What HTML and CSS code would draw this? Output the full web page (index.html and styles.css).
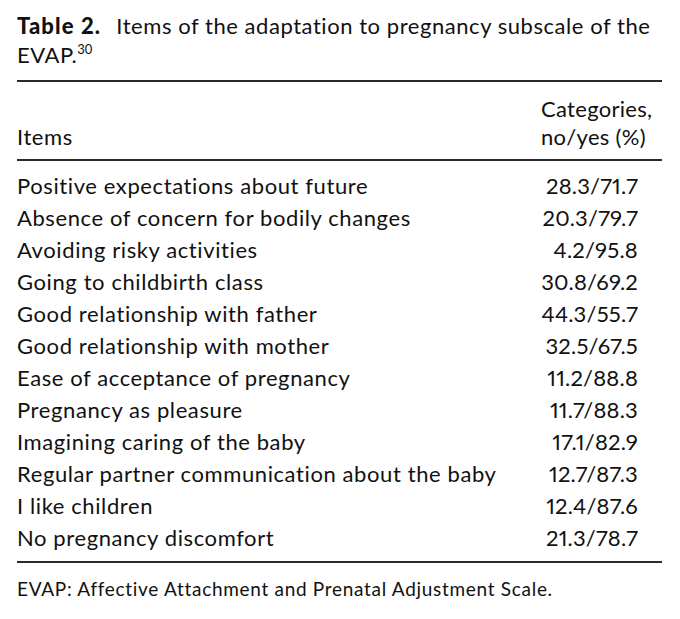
FILE: index.html
```html
<!DOCTYPE html>
<html>
<head>
<meta charset="utf-8">
<link rel="stylesheet" href="styles.css">
</head>
<body>
<div class="page">
  <div class="caption"><span class="label">Table 2.</span> Items of the adaptation to pregnancy subscale of the EVAP.<sup>30</sup></div>
  <div class="table">
    <div class="head">
      <div class="h-items">Items</div>
      <div class="h-cat">Categories,<br>no/yes (%)</div>
    </div>
    <div class="body">
      <div class="row"><span>Positive expectations about future</span><span class="val">28.3/71.7</span></div>
      <div class="row"><span>Absence of concern for bodily changes</span><span class="val">20.3/79.7</span></div>
      <div class="row"><span>Avoiding risky activities</span><span class="val">4.2/95.8</span></div>
      <div class="row"><span>Going to childbirth class</span><span class="val">30.8/69.2</span></div>
      <div class="row"><span>Good relationship with father</span><span class="val">44.3/55.7</span></div>
      <div class="row"><span>Good relationship with mother</span><span class="val">32.5/67.5</span></div>
      <div class="row"><span>Ease of acceptance of pregnancy</span><span class="val">11.2/88.8</span></div>
      <div class="row"><span>Pregnancy as pleasure</span><span class="val">11.7/88.3</span></div>
      <div class="row"><span>Imagining caring of the baby</span><span class="val">17.1/82.9</span></div>
      <div class="row"><span>Regular partner communication about the baby</span><span class="val">12.7/87.3</span></div>
      <div class="row"><span>I like children</span><span class="val">12.4/87.6</span></div>
      <div class="row"><span>No pregnancy discomfort</span><span class="val">21.3/78.7</span></div>
    </div>
  </div>
  <div class="note">EVAP: Affective Attachment and Prenatal Adjustment Scale.</div>
</div>
</body>
</html>
```
FILE: styles.css
```css
html, body {
  margin: 0;
  padding: 0;
  background: #ffffff;
}
body {
  font-family: "Lato", "Open Sans", sans-serif;
  color: #111111;
}
.page {
  width: 645px;
  padding: 11px 0 0 17px;
}
.caption {
  font-size: 22px;
  line-height: 29px;
  letter-spacing: 0.55px;
}
.caption .label {
  font-weight: 900;
  letter-spacing: 1.1px;
  margin-right: 9px;
}
.caption sup {
  font-size: 13px;
  line-height: 0;
  letter-spacing: 0;
  vertical-align: 9px;
}
.table {
  margin-top: 11px;
  border-top: 2px solid #2a2a2a;
  border-bottom: 2px solid #2a2a2a;
  font-size: 22px;
  letter-spacing: 0.6px;
}
.head {
  display: flex;
  justify-content: space-between;
  align-items: flex-end;
  padding: 13px 0 8px;
  border-bottom: 2px solid #2a2a2a;
  line-height: 28px;
}
.h-cat {
  width: 121px;
  letter-spacing: 0.3px;
}
.body {
  padding: 9px 0 7px;
}
.row {
  display: flex;
  justify-content: space-between;
  line-height: 32px;
}
.val {
  padding-right: 24px;
  letter-spacing: 0.2px;
  font-variant-numeric: proportional-nums;
}
.note {
  font-size: 19px;
  line-height: 26px;
  letter-spacing: 0.7px;
  margin-top: 13px;
}
```
